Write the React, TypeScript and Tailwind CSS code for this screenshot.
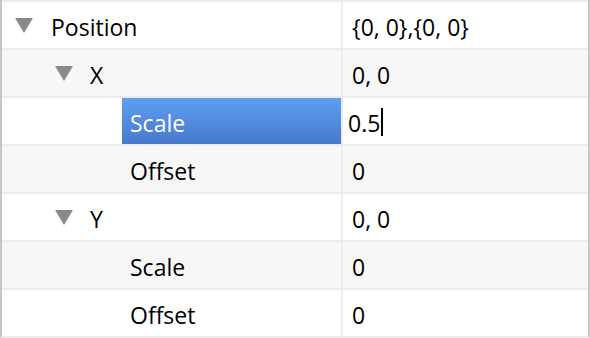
import React from "react";

type Row = {
  label: string;
  value: string;
  indent: number;
  alt: boolean;
  selected?: boolean;
};

const rows: Row[] = [
  { label: "Position", value: "{0, 0},{0, 0}", indent: 0, alt: false },
  { label: "X", value: "0, 0", indent: 1, alt: true },
  { label: "Scale", value: "0.5", indent: 2, alt: false, selected: true },
  { label: "Offset", value: "0", indent: 2, alt: true },
  { label: "Y", value: "0, 0", indent: 1, alt: false },
  { label: "Scale", value: "0", indent: 2, alt: true },
  { label: "Offset", value: "0", indent: 2, alt: false },
];

function Triangle() {
  return (
    <svg width="18" height="15" viewBox="0 0 18 15" className="shrink-0">
      <polygon points="0,0 18,0 9,15" fill="#8a8a8a" />
    </svg>
  );
}

export default function App() {
  return (
    <div
      className="w-[590px] h-[338px] bg-white border-x-2 border-[#c6c6c6] border-b-2 border-b-[#ececec] text-[23px] leading-[28px] font-medium text-black overflow-hidden"
      style={{ fontFamily: "'Open Sans', sans-serif" }}
    >
      {rows.map((r, i) => (
        <div
          key={i}
          className={`flex h-[48px] border-t-2 border-[#ececec] ${r.alt ? "bg-[#f7f7f7]" : "bg-white"}`}
        >
          <div className="w-[339px] shrink-0 flex items-stretch">
            {r.indent === 0 && (
              <div className="flex items-center pl-[13px] gap-[18px]">
                <Triangle />
                <span className="pt-[3px]">{r.label}</span>
              </div>
            )}
            {r.indent === 1 && (
              <div className="flex items-center pl-[53px] gap-[17px]">
                <Triangle />
                <span className="pt-[3px]">{r.label}</span>
              </div>
            )}
            {r.indent === 2 && (
              <div
                className={`ml-[120px] flex-1 flex items-center pl-[8px] ${
                  r.selected ? "bg-gradient-to-b from-[#5f9ef2] to-[#4779cc] text-white" : ""
                }`}
              >
                <span className="pt-[3px]">{r.label}</span>
              </div>
            )}
          </div>
          <div
            className={`flex-1 flex items-center border-l-2 border-[#ececec] ${
              r.selected ? "bg-white pl-[5px]" : "pl-[9px]"
            }`}
          >
            <span className="pt-[3px]">{r.value}</span>
            {r.selected && <span className="ml-[1px] mt-[2px] w-[2px] h-[28px] bg-black" />}
          </div>
        </div>
      ))}
    </div>
  );
}
